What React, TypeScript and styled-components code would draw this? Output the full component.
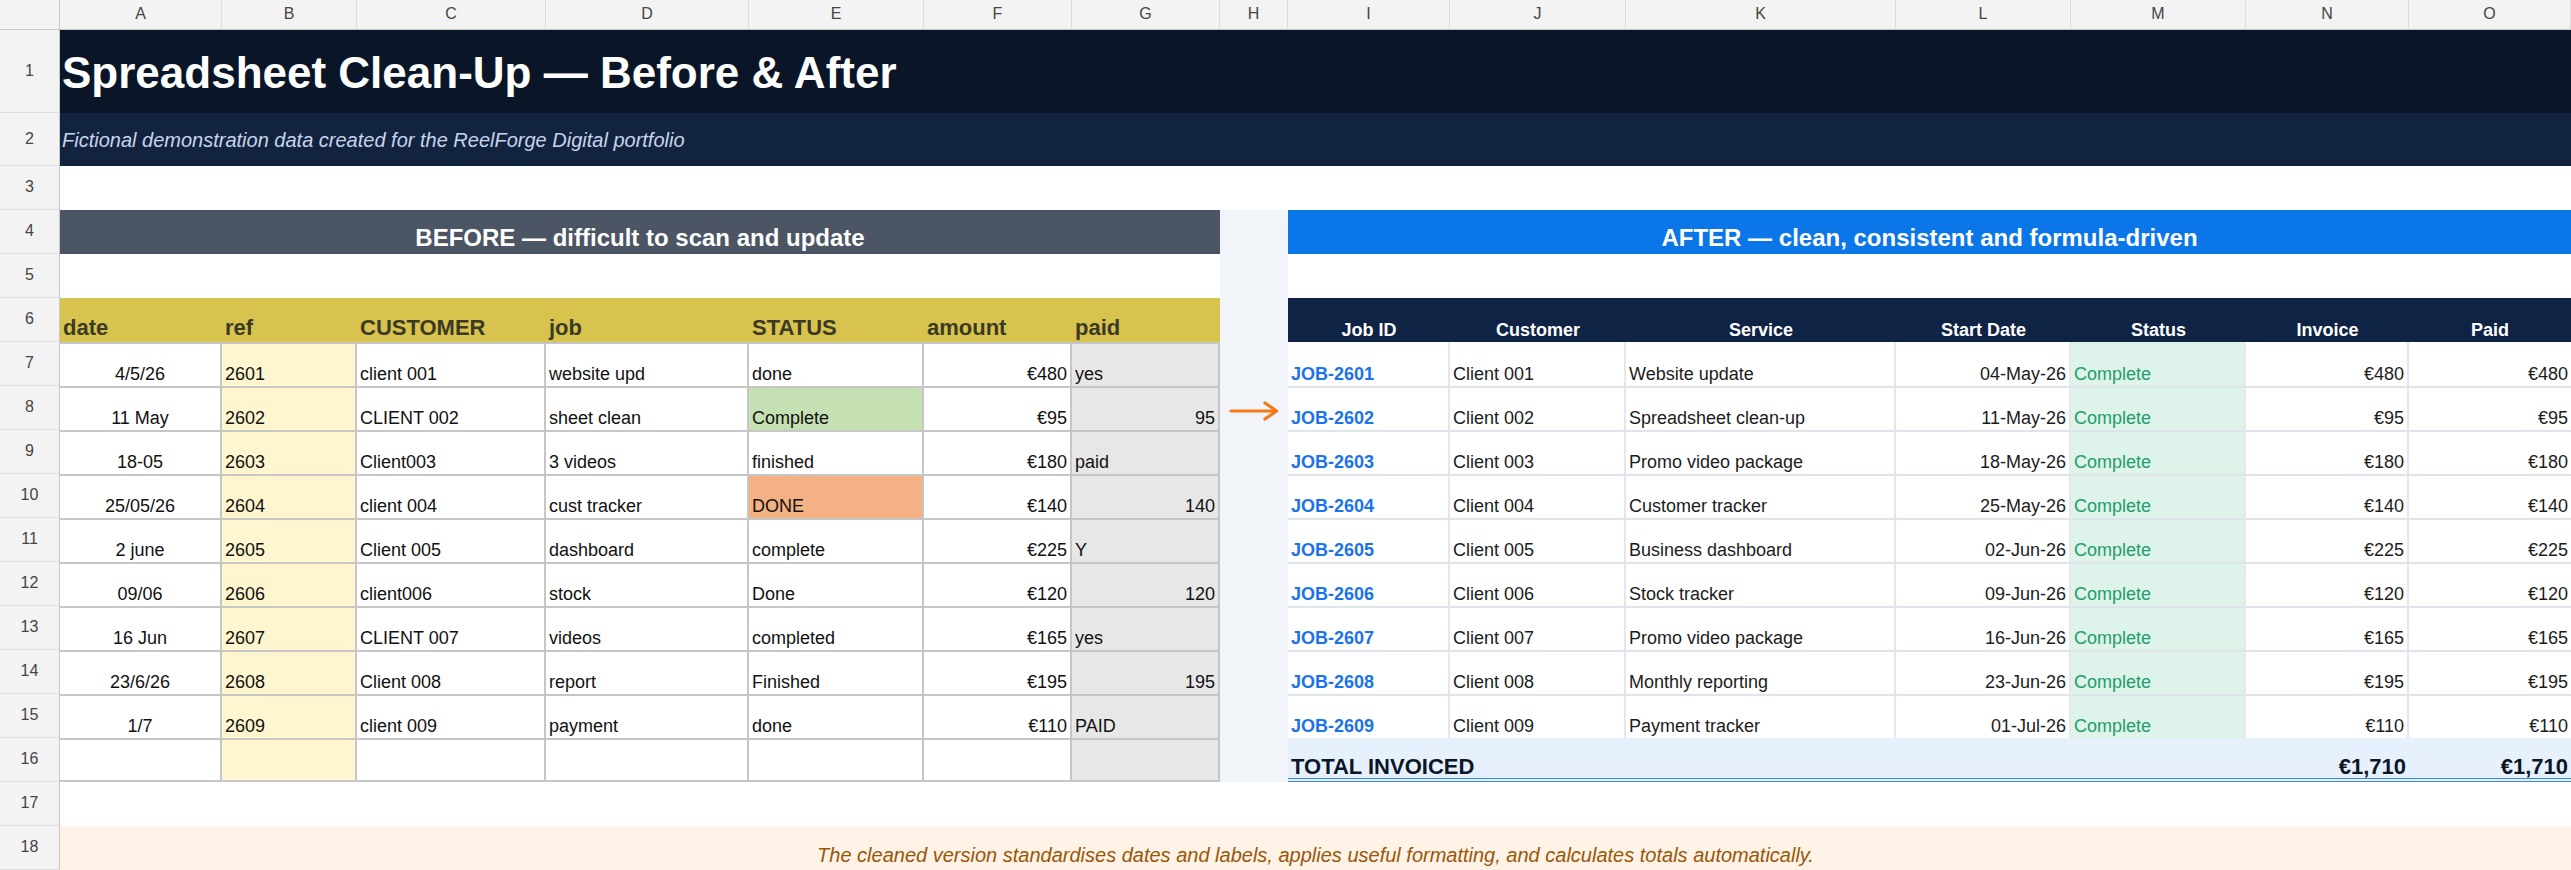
import React from 'react';
import styled, {createGlobalStyle, css} from 'styled-components';

const GlobalStyle = createGlobalStyle`
  html, body {
    margin: 0;
    padding: 0;
    overflow: hidden;
    background: #ffffff;
  }
  body {
    font-family: "Liberation Sans", Arial, sans-serif;
  }
`;

// column widths: row-number gutter, then A..O
const COLS = [60, 162, 135, 189, 203, 175, 148, 148, 68, 162, 176, 270, 175, 175, 163, 162];
const LETTERS = 'ABCDEFGHIJKLMNO'.split('');

const Sheet = styled.div`
  display: grid;
  grid-template-columns: ${COLS.map((w) => `${w}px`).join(' ')};
  grid-template-rows: 30px 83px 53px repeat(16, 44px);
  width: 2571px;
  height: 870px;
  color: #111111;
`;

type Align = 'left' | 'center' | 'right';
const justify = (a: Align = 'left') => (a === 'left' ? 'flex-start' : a === 'right' ? 'flex-end' : 'center');

const cellBase = css<{$span?: number}>`
  grid-column: span ${(p) => p.$span ?? 1};
  display: flex;
  min-width: 0;
  box-sizing: border-box;
  white-space: nowrap;
  line-height: 1.15;
`;

const Corner = styled.div`
  ${cellBase};
  background: #f3f3f3;
  border-right: 1px solid #c7c7c7;
  border-bottom: 1px solid #c7c7c7;
`;

const ColHeader = styled.div`
  ${cellBase};
  align-items: center;
  justify-content: center;
  background: #f3f3f3;
  color: #444444;
  font-size: 16px;
  border-right: 1px solid #dcdcdc;
  border-bottom: 1px solid #c7c7c7;
`;

const RowHeader = styled.div`
  ${cellBase};
  align-items: center;
  justify-content: center;
  background: #f3f3f3;
  color: #444444;
  font-size: 16px;
  border-right: 1px solid #c7c7c7;
  border-bottom: 1px solid #dcdcdc;
`;

const Title = styled.div`
  ${cellBase};
  align-items: center;
  padding: 3px 0 0 2px;
  background: #0a1628;
  color: #ffffff;
  font-size: 44px;
  font-weight: 700;
`;

const Subtitle = styled.div`
  ${cellBase};
  align-items: center;
  padding: 2px 0 0 2px;
  background: #12233f;
  color: #c8d5ea;
  font-size: 20px;
  font-style: italic;
`;

const Blank = styled.div`
  ${cellBase};
  background: #ffffff;
`;

const Banner = styled.div<{$tone: 'before' | 'after'}>`
  ${cellBase};
  align-items: flex-end;
  justify-content: center;
  padding-bottom: 2px;
  background: ${(p) => (p.$tone === 'before' ? '#4b5563' : '#0a76e8')};
  color: #ffffff;
  font-size: 24px;
  font-weight: 700;
`;

const Gutter = styled.div<{$shaded?: boolean}>`
  ${cellBase};
  align-items: flex-end;
  justify-content: center;
  padding-bottom: 9px;
  background: ${(p) => (p.$shaded ? '#f1f5f9' : '#ffffff')};
`;

const BeforeHead = styled.div`
  ${cellBase};
  align-items: flex-end;
  padding: 0 3px 2px;
  background: #d9c34f;
  color: #3b3a24;
  font-size: 22px;
  font-weight: 700;
`;

type Fill = 'none' | 'ref' | 'paid' | 'ok' | 'warn';
const FILLS: Record<Fill, string> = {
  none: '#ffffff',
  ref: '#fff6cf',
  paid: '#e7e7e7',
  ok: '#c5e0b3',
  warn: '#f4b183',
};

const BeforeCell = styled.div<{$align?: Align; $fill: Fill; $last?: boolean}>`
  ${cellBase};
  align-items: flex-end;
  justify-content: ${(p) => justify(p.$align)};
  padding: 0 3px 1px;
  background: ${(p) => FILLS[p.$fill]};
  font-size: 18px;
  border-top: 2px solid #c6c6c6;
  border-right: 2px solid #c6c6c6;
  border-bottom: ${(p) => (p.$last ? '2px solid #c6c6c6' : 'none')};
`;

const AfterHead = styled.div`
  ${cellBase};
  align-items: flex-end;
  justify-content: center;
  padding-bottom: 1px;
  background: #0f2445;
  color: #ffffff;
  font-size: 18px;
  font-weight: 700;
`;

type Kind = 'id' | 'status' | 'plain';

const AfterCell = styled.div<{$align?: Align; $kind?: Kind; $first?: boolean; $end?: boolean}>`
  ${cellBase};
  align-items: flex-end;
  justify-content: ${(p) => justify(p.$align)};
  padding: 0 3px 1px;
  font-size: 18px;
  background: ${(p) => (p.$kind === 'status' ? '#def3e9' : '#ffffff')};
  color: ${(p) => (p.$kind === 'id' ? '#1a73e8' : p.$kind === 'status' ? '#1d9e6b' : '#1c1c1c')};
  font-weight: ${(p) => (p.$kind === 'id' ? 700 : 400)};
  border-top: ${(p) => (p.$first ? 'none' : '2px solid #dfe4ec')};
  border-right: ${(p) => (p.$end ? 'none' : '2px solid #e4e8ee')};
`;

const TotalCell = styled.div<{$align?: Align}>`
  ${cellBase};
  align-items: flex-end;
  justify-content: ${(p) => justify(p.$align)};
  padding: 0 3px;
  line-height: 1;
  background: #e7f1fd;
  color: #0b1628;
  font-size: 22px;
  font-weight: 700;
  border-bottom: 4px double #3a86e0;
`;

const Note = styled.div`
  ${cellBase};
  align-items: flex-end;
  justify-content: center;
  padding-bottom: 3px;
  background: #fef3e6;
  color: #9a5608;
  font-size: 20px;
  font-style: italic;
`;

const Arrow = () => (
  <svg width="50" height="20" viewBox="0 0 50 20">
    <g fill="none" stroke="#f47a14" strokeWidth="3.2" strokeLinecap="round" strokeLinejoin="round">
      <path d="M2 10 H47" />
      <path d="M36 2 L47.5 10 L36 18" />
    </g>
  </svg>
);

const BEFORE_HEAD = ['date', 'ref', 'CUSTOMER', 'job', 'STATUS', 'amount', 'paid'];
const BEFORE: string[][] = [
  ['4/5/26', '2601', 'client 001', 'website upd', 'done', '€480', 'yes'],
  ['11 May', '2602', 'CLIENT 002', 'sheet clean', 'Complete', '€95', '95'],
  ['18-05', '2603', 'Client003', '3 videos', 'finished', '€180', 'paid'],
  ['25/05/26', '2604', 'client 004', 'cust tracker', 'DONE', '€140', '140'],
  ['2 june', '2605', 'Client 005', 'dashboard', 'complete', '€225', 'Y'],
  ['09/06', '2606', 'client006', 'stock', 'Done', '€120', '120'],
  ['16 Jun', '2607', 'CLIENT 007', 'videos', 'completed', '€165', 'yes'],
  ['23/6/26', '2608', 'Client 008', 'report', 'Finished', '€195', '195'],
  ['1/7', '2609', 'client 009', 'payment', 'done', '€110', 'PAID'],
  ['', '', '', '', '', '', ''],
];

const AFTER_HEAD = ['Job ID', 'Customer', 'Service', 'Start Date', 'Status', 'Invoice', 'Paid'];
const AFTER: string[][] = [
  ['JOB-2601', 'Client 001', 'Website update', '04-May-26', '€480'],
  ['JOB-2602', 'Client 002', 'Spreadsheet clean-up', '11-May-26', '€95'],
  ['JOB-2603', 'Client 003', 'Promo video package', '18-May-26', '€180'],
  ['JOB-2604', 'Client 004', 'Customer tracker', '25-May-26', '€140'],
  ['JOB-2605', 'Client 005', 'Business dashboard', '02-Jun-26', '€225'],
  ['JOB-2606', 'Client 006', 'Stock tracker', '09-Jun-26', '€120'],
  ['JOB-2607', 'Client 007', 'Promo video package', '16-Jun-26', '€165'],
  ['JOB-2608', 'Client 008', 'Monthly reporting', '23-Jun-26', '€195'],
  ['JOB-2609', 'Client 009', 'Payment tracker', '01-Jul-26', '€110'],
];

const beforeFill = (row: number, col: number): Fill => {
  if (col === 1) return 'ref';
  if (col === 6) return 'paid';
  if (col === 4 && row === 1) return 'ok';
  if (col === 4 && row === 3) return 'warn';
  return 'none';
};

const beforeAlign = (value: string, col: number): Align => {
  if (col === 0) return 'center';
  if (col === 5) return 'right';
  if (col === 6 && /^\d+$/.test(value)) return 'right';
  return 'left';
};

const App = () => {
  return (
    <>
      <GlobalStyle />
      <Sheet>
        <Corner />
        {LETTERS.map((l) => (
          <ColHeader key={l}>{l}</ColHeader>
        ))}

        <RowHeader>1</RowHeader>
        <Title $span={15}>Spreadsheet Clean-Up — Before &amp; After</Title>

        <RowHeader>2</RowHeader>
        <Subtitle $span={15}>Fictional demonstration data created for the ReelForge Digital portfolio</Subtitle>

        <RowHeader>3</RowHeader>
        <Blank $span={15} />

        <RowHeader>4</RowHeader>
        <Banner $span={7} $tone="before">BEFORE — difficult to scan and update</Banner>
        <Gutter $shaded />
        <Banner $span={7} $tone="after">AFTER — clean, consistent and formula-driven</Banner>

        <RowHeader>5</RowHeader>
        <Blank $span={7} />
        <Gutter $shaded />
        <Blank $span={7} />

        <RowHeader>6</RowHeader>
        {BEFORE_HEAD.map((h) => (
          <BeforeHead key={h}>{h}</BeforeHead>
        ))}
        <Gutter $shaded />
        {AFTER_HEAD.map((h) => (
          <AfterHead key={h}>{h}</AfterHead>
        ))}

        {BEFORE.map((row, r) => {
          const after = AFTER[r];
          const last = r === BEFORE.length - 1;
          return (
            <React.Fragment key={r}>
              <RowHeader>{r + 7}</RowHeader>
              {row.map((v, c) => (
                <BeforeCell key={c} $fill={beforeFill(r, c)} $align={beforeAlign(v, c)} $last={last}>
                  {v}
                </BeforeCell>
              ))}
              <Gutter $shaded>{r === 1 && <Arrow />}</Gutter>
              {after ? (
                <>
                  <AfterCell $kind="id" $first={r === 0}>{after[0]}</AfterCell>
                  <AfterCell $first={r === 0}>{after[1]}</AfterCell>
                  <AfterCell $first={r === 0}>{after[2]}</AfterCell>
                  <AfterCell $align="right" $first={r === 0}>{after[3]}</AfterCell>
                  <AfterCell $kind="status" $first={r === 0}>Complete</AfterCell>
                  <AfterCell $align="right" $first={r === 0}>{after[4]}</AfterCell>
                  <AfterCell $align="right" $first={r === 0} $end>{after[4]}</AfterCell>
                </>
              ) : (
                <>
                  <TotalCell $span={5}>TOTAL INVOICED</TotalCell>
                  <TotalCell $align="right">€1,710</TotalCell>
                  <TotalCell $align="right">€1,710</TotalCell>
                </>
              )}
            </React.Fragment>
          );
        })}

        <RowHeader>17</RowHeader>
        <Blank $span={15} />

        <RowHeader>18</RowHeader>
        <Note $span={15}>
          The cleaned version standardises dates and labels, applies useful formatting, and calculates totals automatically.
        </Note>
      </Sheet>
    </>
  );
};

export default App;
